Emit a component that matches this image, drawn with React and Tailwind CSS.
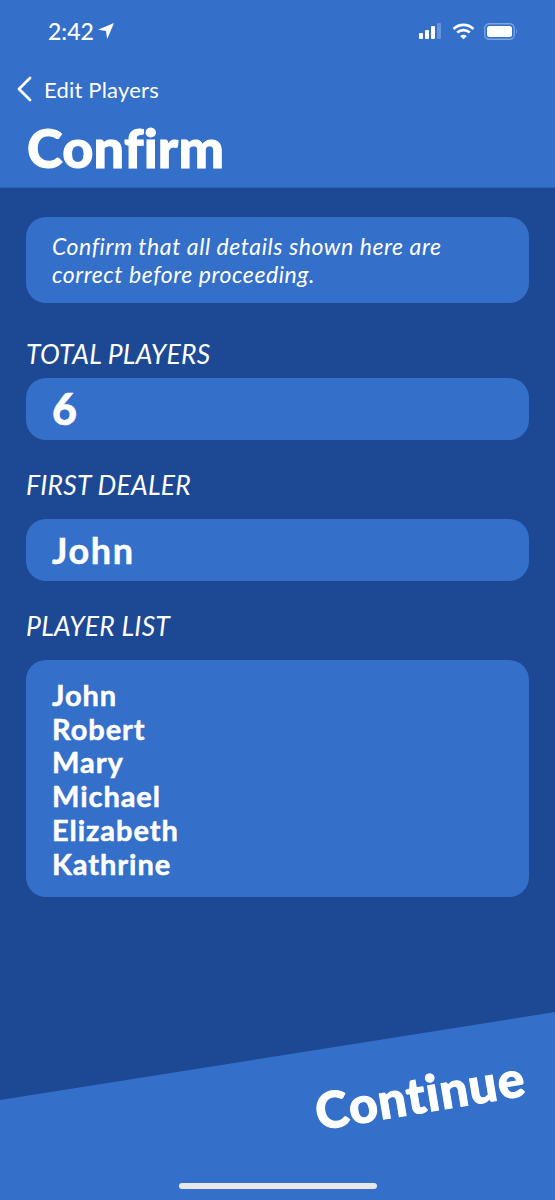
const F = "font-['Lato','Noto_Sans',sans-serif]";

function Label({ children, className = "" }) {
  return <div className={`text-[26.5px] leading-[30px] italic text-white tracking-[0.25px] ${className}`}>{children}</div>;
}

function Value({ children }) {
  return (
    <div className="h-[62px] rounded-[20px] bg-[#3470c9] pl-[26px] flex items-center text-[36px] font-bold text-white tracking-[1.6px] [-webkit-text-stroke:0.5px_white]">
      {children}
    </div>
  );
}

export default function App() {
  return (
    <div className={`${F} w-[555px] h-[1200px] bg-[#1c4894] flex flex-col overflow-hidden`}>
      <header className="h-[188px] bg-[#3470c9] shrink-0 flex flex-col border-b border-[#2d64b6]">
        <div className="h-[62px] flex items-start justify-between pl-[48px] pr-[37px] pt-[19px]">
          <div className="flex items-center gap-[4px]">
            <span className="text-[23px] leading-[24px] font-medium text-white">2:42</span>
            <svg width="16" height="16" viewBox="0 0 16 16" className="fill-white">
              <path d="M16 0 L0 6.8 L8 8 L9.2 16 Z" />
            </svg>
          </div>
          <div className="flex items-center gap-[9px] h-[24px]">
            <svg width="24" height="16" viewBox="0 0 24 16" className="fill-white">
              <rect x="0" y="10" width="4" height="6" rx="1" />
              <rect x="6" y="7" width="4" height="9" rx="1" />
              <rect x="12" y="3" width="4" height="13" rx="1" />
              <rect x="18" y="0" width="4" height="16" rx="1" fillOpacity="0.25" />
            </svg>
            <svg width="23" height="17" viewBox="0 0 22 16" fill="none" className="stroke-white">
              <path d="M1.5 5.5 C7 0.5 15 0.5 20.5 5.5" strokeWidth="2.6" />
              <path d="M5 9 C8.5 6 13.5 6 17 9" strokeWidth="2.6" />
              <path d="M11 15.5 L7.8 12.3 C9.6 10.8 12.4 10.8 14.2 12.3 Z" className="fill-white" strokeWidth="0" />
            </svg>
            <svg width="34" height="17" viewBox="0 0 34 17" fill="none">
              <rect x="0.75" y="0.75" width="29.5" height="15.5" rx="4.5" stroke="#7ea6e0" strokeWidth="1.3" />
              <rect x="3" y="3" width="25" height="11" rx="2.5" fill="#fff" />
              <path d="M32 6 C33 6.5 33 10.5 32 11 Z" fill="#7ea6e0" />
            </svg>
          </div>
        </div>
        <div className="h-[36px] mt-[9px] flex items-center pl-[16px] gap-[12px]">
          <svg width="16" height="26" viewBox="0 0 16 26" fill="none" className="stroke-white">
            <path d="M14 2 L3 13 L14 24" strokeWidth="2.8" strokeLinecap="round" strokeLinejoin="round" />
          </svg>
          <span className="text-[22px] text-white tracking-[0.2px]">Edit Players</span>
        </div>
        <h1 className="pl-[27px] mt-[11px] text-[54px] leading-[60px] font-black text-white tracking-[0.2px] [-webkit-text-stroke:1px_white]">Confirm</h1>
      </header>

      <main className="flex-1 px-[26px] pt-[29px] flex flex-col">
        <div className="h-[86px] rounded-[20px] bg-[#3470c9] pl-[26px] flex flex-col justify-center text-[23px] leading-[28px] italic text-white tracking-[0.57px]">
          <div>Confirm that all details shown here are</div>
          <div>correct before proceeding.</div>
        </div>
        <Label className="mt-[36px] mb-[9px]">TOTAL PLAYERS</Label>
        <Value><span className="text-[43px] font-black">6</span></Value>
        <Label className="mt-[30px] mb-[19px]">FIRST DEALER</Label>
        <Value>John</Value>
        <Label className="mt-[30px] mb-[19px]">PLAYER LIST</Label>
        <div className="h-[237px] rounded-[20px] bg-[#3470c9] pl-[26px] pt-[18px] text-[29px] leading-[33.7px] font-bold text-white tracking-[0.95px] [-webkit-text-stroke:0.5px_white]">
          <div>John</div>
          <div>Robert</div>
          <div>Mary</div>
          <div>Michael</div>
          <div>Elizabeth</div>
          <div>Kathrine</div>
        </div>
      </main>

      <footer className="h-[188px] shrink-0 bg-[#3470c9] [clip-path:polygon(0_88px,100%_0,100%_100%,0_100%)] flex flex-col items-center">
        <div className="w-full flex justify-end pr-[29px] pt-[55px]">
          <span className="text-[50px] leading-[54px] font-black text-white rotate-[-9.5deg] tracking-[0.9px] [-webkit-text-stroke:1px_white]">Continue</span>
        </div>
        <div className="mt-auto mb-[11px] w-[198px] h-[6px] rounded-full bg-[#e6e8ec]"></div>
      </footer>
    </div>
  );
}
